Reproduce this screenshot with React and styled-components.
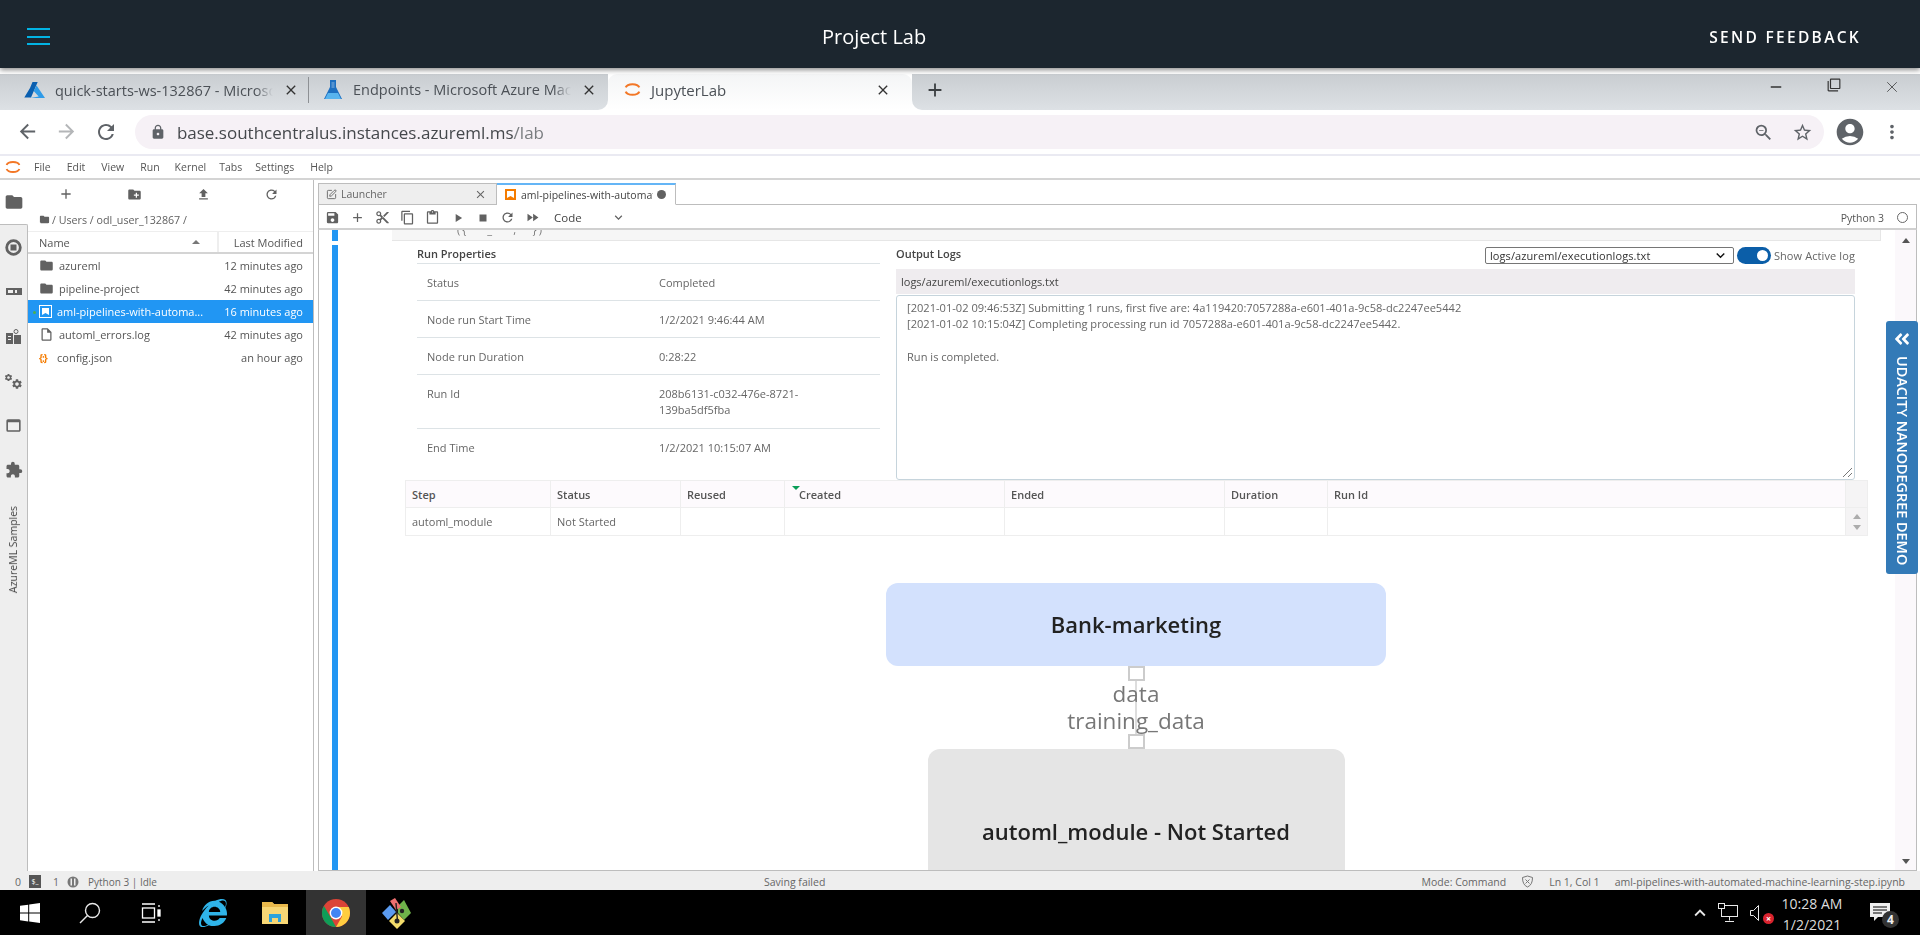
import React from 'react';
import styled, { createGlobalStyle } from 'styled-components';
import { SquarePen, X } from 'lucide-react';
import { FaAngleDoubleLeft, FaInternetExplorer } from 'react-icons/fa';
import {
  MdAdd, MdArrowBack, MdArrowForward, MdAccountCircle, MdClose, MdContentCopy, MdContentCut, MdContentPaste,
  MdCreateNewFolder, MdExpandMore, MdExtension, MdFastForward, MdFileUpload, MdFolder, MdLock, MdMoreVert,
  MdOutlineFilterNone, MdOutlineInsertDriveFile, MdOutlineStarBorder, MdOutlineWebAsset,
  MdPlayArrow, MdRefresh, MdRemove, MdSave, MdSettings, MdStop, MdZoomOut,
} from 'react-icons/md';

const GlobalStyle = createGlobalStyle`
  html, body { margin: 0; padding: 0; height: 100%; background: #fff; }
  * { box-sizing: border-box; }
`;

const Screen = styled.div`
  position: relative;
  width: 1920px;
  height: 935px;
  display: flex;
  flex-direction: column;
  overflow: hidden;
  font-family: "Open Sans", "Noto Sans", sans-serif;
  color: #555;
  filter: blur(0.35px);
`;

/* classroom header */
const TopBar = styled.header`
  flex: 0 0 68px;
  display: grid;
  grid-template-columns: 795px auto 1fr;
  align-items: center;
  padding: 5px 59px 0 27px;
  background: #1c262f;
  color: #fff;
  box-shadow: 0 2px 5px rgba(0, 0, 0, 0.45);
  z-index: 2;
`;
const Burger = styled.div`
  width: 23px;
  height: 17px;
  border-top: 2px solid #02b3e4;
  border-bottom: 2px solid #02b3e4;
  display: flex;
  align-items: center;
  &::before { content: ''; display: block; width: 100%; height: 2px; background: #02b3e4; }
`;
const ProjectTitle = styled.div`
  font-size: 20px;
`;
const Feedback = styled.div`
  justify-self: end;
  font-size: 15.5px;
  font-weight: 600;
  letter-spacing: 2.3px;
`;

/* chrome */
const TabStrip = styled.div`
  flex: 0 0 36px;
  margin-top: 6px;
  display: flex;
  background: #fff;
  font-size: 14.5px;
  color: #4b5056;
`;
const InactiveTabs = styled.div`
  display: flex;
  width: 608px;
  background: linear-gradient(#c9cdd1, #dde1e5);
  border-bottom-right-radius: 10px;
`;
const BrowserTab = styled.div`
  position: relative;
  width: ${p => p.$w}px;
  padding: 0 0 5px ${p => p.$pad}px;
  display: flex;
  align-items: center;
  gap: 10px;
  ${p => p.$sep && `border-right: 1px solid #8d9094; margin: 3px 0 7px; height: 26px; padding-bottom: 0;`}
`;
const ActiveTab = styled(BrowserTab)`
  background: linear-gradient(#f4f5f6, #fff);
  border-radius: 9px 9px 0 0;
  font-size: 15px;
`;
const TabLabel = styled.span`
  width: ${p => p.$w}px;
  white-space: nowrap;
  overflow: hidden;
  -webkit-mask-image: linear-gradient(to right, #000 92%, transparent);
`;
const TabClose = styled.span`
  margin-left: ${p => p.$gap}px;
  display: flex;
  color: #333;
`;
const StripRest = styled.div`
  flex: 1;
  display: flex;
  align-items: center;
  padding: 0 0 5px 12px;
  background: linear-gradient(#c9cdd1, #dde1e5);
  border-bottom-left-radius: 10px;
  color: #3c4043;
`;
const WindowButtons = styled.div`
  margin-left: auto;
  margin-right: 19px;
  margin-top: -6px;
  display: flex;
  gap: 42px;
  color: #333;
`;
const AddressRow = styled.div`
  flex: 0 0 46px;
  display: flex;
  align-items: center;
  padding: 0 17px 0 16px;
  color: #5f6368;
  border-bottom: 2px solid #eaeaf2;
`;
const NavButtons = styled.div`
  display: flex;
  gap: 16px;
  width: 119px;
`;
const AddressPill = styled.div`
  width: 1691px;
  height: 34px;
  display: flex;
  align-items: center;
  padding: 0 11px 0 15px;
  border-radius: 17px;
  background: #f6f1f6;
`;
const Url = styled.span`
  margin-left: 11px;
  font-size: 17px;
  color: #45484c;
  em { font-style: normal; color: #7a7d80; }
`;
const PillIcons = styled.div`
  margin-left: auto;
  display: flex;
  gap: 18px;
  align-items: center;
`;

/* jupyter */
const MenuBar = styled.nav`
  flex: 0 0 24px;
  display: flex;
  align-items: center;
  padding-left: 5px;
  border-bottom: 2px solid #d4d4d4;
  font-size: 10.5px;
  color: #555;
`;
const MenuLabel = styled.span`
  margin-left: ${p => p.$m}px;
`;
const Main = styled.div`
  flex: 1;
  min-height: 0;
  display: flex;
`;
const Rail = styled.div`
  flex: 0 0 27px;
  display: flex;
  flex-direction: column;
`;
const RailActive = styled.div`
  flex: 0 0 44px;
  display: flex;
  justify-content: center;
  align-items: center;
  color: #616161;
`;
const RailRest = styled.div`
  flex: 1;
  background: #eee;
  border-top: 1px solid #bdbdbd;
  border-right: 1px solid #bdbdbd;
  border-radius: 0 2px 0 0;
`;
const RailIcon = styled.div`
  height: 44.6px;
  display: flex;
  align-items: center;
  justify-content: center;
  color: #616161;
`;
const GearPair = styled.div`
  display: flex;
  align-items: flex-start;
  height: 17px;
  & > svg:first-child { margin-right: -2px; }
  & > svg:last-child { margin-top: 5px; }
`;
const RailText = styled.div`
  margin: 13px auto 0;
  writing-mode: vertical-rl;
  transform: rotate(180deg);
  font-size: 10.5px;
  color: #444;
  width: 27px;
  line-height: 27px;
`;
const Sidebar = styled.aside`
  flex: 0 0 286px;
  border-right: 1px solid #bdbdbd;
  display: flex;
  flex-direction: column;
`;
const SideTools = styled.div`
  flex: 0 0 28px;
  display: grid;
  grid-template-columns: repeat(4, 68.5px);
  margin-left: 4px;
  align-items: center;
  justify-items: center;
  color: #616161;
`;
const Crumbs = styled.div`
  flex: 0 0 23px;
  display: flex;
  align-items: center;
  gap: 2px;
  padding-left: 11px;
  font-size: 10.7px;
  color: #616161;
`;
const ListHead = styled.div`
  flex: 0 0 23px;
  display: flex;
  align-items: center;
  border-top: 1px solid #eee;
  border-bottom: 2px solid #d4d4d4;
  font-size: 11px;
  color: #555;
`;
const NameHead = styled.div`
  flex: 0 0 191px;
  height: 100%;
  padding: 0 11px;
  display: flex;
  align-items: center;
  justify-content: space-between;
  border-right: 2px solid #eee;
  &::after { content: ''; border: 4px solid transparent; border-bottom: 4px solid #777; margin: -5px 6px 0 0; }
`;
const ModHead = styled.div`
  flex: 1;
  text-align: right;
  padding-right: 10px;
`;
const FileRow = styled.div`
  position: relative;
  height: 23px;
  display: flex;
  align-items: center;
  padding: 0 10px 0 11px;
  font-size: 11px;
  color: ${p => (p.$selected ? '#fff' : '#555')};
  background: ${p => (p.$selected ? '#2196f3' : 'transparent')};
`;
const FileName = styled.span`
  margin-left: 5px;
`;
const FileTime = styled.span`
  margin-left: auto;
`;
const RunDot = styled.span`
  position: absolute;
  left: 5px;
  top: 11px;
  width: 3px;
  height: 3px;
  border-radius: 50%;
  background: #4caf50;
`;

const Dock = styled.section`
  flex: 0 0 1599px;
  margin-left: 4px;
  display: flex;
  flex-direction: column;
  min-height: 0;
`;
const DockTabs = styled.div`
  flex: 0 0 25px;
  padding-top: 3px;
  display: flex;
  font-size: 10.5px;
  border-bottom: 1px solid #bdbdbd;
`;
const DockTab = styled.div`
  width: ${p => p.$w}px;
  display: flex;
  align-items: center;
  gap: 4px;
  padding: 0 9px 0 7px;
  margin-bottom: -1px;
  border: 1px solid #bdbdbd;
  border-left: ${p => (p.$active ? 'none' : '1px solid #bdbdbd')};
  background: ${p => (p.$active ? '#fff' : '#eee')};
  border-bottom-color: ${p => (p.$active ? '#fff' : '#bdbdbd')};
  border-top: ${p => (p.$active ? '2px solid #64b5f6' : '1px solid #bdbdbd')};
  color: ${p => (p.$active ? '#444' : '#666')};
  white-space: nowrap;
  overflow: hidden;
`;
const DockTabName = styled.span`
  flex: 1;
  overflow: hidden;
`;
const DirtyDot = styled.span`
  flex: 0 0 9px;
  height: 9px;
  border-radius: 50%;
  background: #616161;
`;
const NbToolbar = styled.div`
  flex: 0 0 25px;
  display: flex;
  align-items: center;
  padding: 2px 8px 0 1px;
  border: 1px solid #bdbdbd;
  border-top: none;
  border-bottom: 2px solid #d0d0d0;
  color: #616161;
`;
const ToolSlot = styled.span`
  flex: 0 0 25px;
  display: flex;
  justify-content: center;
`;
const CellKind = styled.span`
  width: 57px;
  margin-left: 9px;
  font-size: 11.5px;
  color: #444;
`;
const KernelName = styled.span`
  margin-left: auto;
  margin-right: 13px;
  font-size: 10.5px;
  color: #555;
`;
const KernelIdle = styled.span`
  width: 11px;
  height: 11px;
  border: 1px solid #666;
  border-radius: 50%;
`;
const NotebookBody = styled.div`
  flex: 1;
  min-height: 0;
  display: flex;
  border: 1px solid #bdbdbd;
  border-top: none;
`;
const Cells = styled.div`
  flex: 1;
  min-width: 0;
  overflow: hidden;
  padding-left: 13px;
`;
const Scrollbar = styled.div`
  flex: 0 0 21px;
  display: flex;
  flex-direction: column;
  justify-content: space-between;
  align-items: center;
  padding: 8px 0 6px;
  background: #fbf8fb;
`;
const ArrowUp = styled.span`
  border: 4px solid transparent;
  border-bottom: 5px solid #555;
  border-top: none;
`;
const ArrowDown = styled.span`
  border: 4px solid transparent;
  border-top: 5px solid #555;
  border-bottom: none;
`;
const CodeRow = styled.div`
  display: flex;
  height: 11px;
`;
const Collapser = styled.div`
  flex: 0 0 6px;
  background: #2196f3;
`;
const CodeTail = styled.div`
  margin-left: 54px;
  width: 1489px;
  height: 11px;
  background: #f6f6f6;
  border-bottom: 1px solid #e6e6e6;
  border-right: 1px solid #e6e6e6;
  overflow: hidden;
  font-size: 11px;
  line-height: 0;
  letter-spacing: 2px;
  padding-left: 65px;
  color: #777;
  white-space: pre;
`;
const OutputRow = styled.div`
  display: flex;
  margin-top: 4px;
  height: 640px;
`;
const Output = styled.div`
  margin-left: 67px;
  width: 1462px;
  display: flex;
  flex-direction: column;
`;
const TopPanels = styled.div`
  height: 239px;
  display: flex;
  padding-left: 12px;
`;
const PropsPanel = styled.div`
  flex: 0 0 463px;
`;
const PanelTitle = styled.div`
  height: 19px;
  font-size: 11px;
  font-weight: 600;
  line-height: 17px;
  color: #444;
  border-bottom: 1px solid ${p => (p.$plain ? 'transparent' : '#dde3e6')};
`;
const PropRow = styled.div`
  height: ${p => p.$h}px;
  padding-top: 10.5px;
  display: grid;
  grid-template-columns: 232px 160px;
  padding-left: 10px;
  font-size: 11px;
  line-height: 16px;
  color: #666;
  border-bottom: 1px solid ${p => (p.$last ? 'transparent' : '#dde3e6')};
`;
const LogsPanel = styled.div`
  flex: 0 0 959px;
  margin-left: 16px;
`;
const LogsHead = styled.div`
  height: 24px;
  display: flex;
  align-items: flex-start;
  justify-content: space-between;
`;
const LogControls = styled.div`
  display: flex;
  align-items: center;
  gap: 3px;
  margin-top: 2px;
  font-size: 11px;
  letter-spacing: 0.1px;
  color: #666;
`;
const FakeSelect = styled.div`
  width: 249px;
  height: 17px;
  padding: 0 4px;
  display: flex;
  align-items: center;
  justify-content: space-between;
  border: 1px solid #767676;
  border-radius: 2px;
  font-size: 11px;
  color: #333;
`;
const Toggle = styled.div`
  position: relative;
  width: 34px;
  height: 17px;
  border-radius: 9px;
  background: #0b5ea8;
  &::after {
    content: '';
    position: absolute;
    right: 3px;
    top: 3px;
    width: 11px;
    height: 11px;
    border-radius: 50%;
    background: #fff;
  }
`;
const FileBar = styled.div`
  height: 25px;
  padding-left: 5px;
  line-height: 25px;
  font-size: 11px;
  color: #444;
  background: #efecef;
`;
const LogBox = styled.div`
  position: relative;
  height: 185px;
  margin-top: 1px;
  padding: 4px 10px;
  border: 1px solid #c6d4dc;
  border-radius: 3px;
  font-size: 11.1px;
  line-height: 16.3px;
  color: #666;
  white-space: pre-line;
`;
const Grip = styled.svg`
  position: absolute;
  right: 1px;
  bottom: 1px;
`;
const StepTable = styled.table`
  width: 1462px;
  table-layout: fixed;
  border-collapse: collapse;
  font-size: 11px;
  color: #666;
`;
const StepHead = styled.th`
  position: relative;
  height: 27px;
  padding: 0 6px 0 ${p => (p.$sorted ? 14 : 6)}px;
  text-align: left;
  font-weight: 600;
  color: #555;
  background: ${p => (p.$gutter ? '#f5f4f5' : '#fdfafd')};
  border: 1px solid #eee;
`;
const StepCell = styled.td`
  height: 28px;
  padding: 0 6px;
  border: 1px solid #eee;
  background: ${p => (p.$gutter ? '#f5f4f5' : '#fff')};
`;
const SortMark = styled.span`
  position: absolute;
  left: 7px;
  top: 5px;
  border: 4px solid transparent;
  border-top: 4px solid #0a9d58;
  border-bottom: none;
`;
const StepperArrows = styled.div`
  display: flex;
  flex-direction: column;
  align-items: center;
  gap: 6px;
  span { opacity: 0.45; }
`;
const Graph = styled.div`
  margin-top: 47px;
  display: flex;
  flex-direction: column;
  align-items: center;
`;
const GraphNode = styled.div`
  width: ${p => p.$w}px;
  height: ${p => p.$h}px;
  padding-top: ${p => p.$top}px;
  flex-shrink: 0;
  border-radius: 12px;
  background: ${p => p.$bg};
  text-align: center;
  font-size: 22px;
  font-weight: 600;
  line-height: 28px;
  color: #222;
`;
const Port = styled.div`
  width: 17px;
  height: 15px;
  border: 2px solid #ccc;
  background: #fff;
`;
const Edge = styled.div`
  position: relative;
  height: 53px;
  display: flex;
  flex-direction: column;
  align-items: center;
  font-size: 22.5px;
  font-weight: 500;
  line-height: 26.5px;
  color: #777;
  &::before {
    content: '';
    position: absolute;
    top: 0;
    bottom: 0;
    left: 50%;
    width: 2px;
    margin-left: -1px;
    background: #ddd;
  }
`;
const EdgeLabel = styled.span`
  position: relative;
`;

const DemoTab = styled.div`
  position: absolute;
  right: 2px;
  top: 321px;
  width: 32px;
  height: 253px;
  display: flex;
  flex-direction: column;
  align-items: center;
  padding-top: 9px;
  gap: 8px;
  background: #337ab7;
  border-radius: 3px;
  color: #fff;
  z-index: 3;
`;
const DemoText = styled.span`
  writing-mode: vertical-rl;
  font-size: 14.4px;
  font-weight: 600;
  white-space: nowrap;
  line-height: 32px;
`;

const StatusBar = styled.footer`
  flex: 0 0 19px;
  display: flex;
  align-items: center;
  padding: 2px 15px 0 15px;
  background: #eee;
  font-size: 10.5px;
  color: #666;
`;
const StatusLeft = styled.div`
  flex: 0 0 749px;
  display: flex;
  align-items: center;
`;
const TermIcon = styled.span`
  width: 12px;
  height: 13px;
  margin: 0 12px 0 8px;
  background: #555;
  color: #fff;
  font-size: 7px;
  line-height: 13px;
  text-align: center;
`;
const KernelSpin = styled.span`
  display: flex;
  margin-left: 8px;
`;
const KernelChip = styled.span`
  margin-left: 9px;
  font-size: 10px;
`;
const StatusRight = styled.div`
  margin-left: auto;
  display: flex;
  align-items: center;
  gap: 15px;
`;

const Taskbar = styled.div`
  flex: 0 0 45px;
  display: flex;
  align-items: stretch;
  background: #000;
  color: #e8e8e8;
`;
const TaskSlot = styled.div`
  width: ${p => p.$w || 60}px;
  display: flex;
  align-items: center;
  justify-content: center;
  background: ${p => (p.$active ? '#333' : 'transparent')};
`;
const Tray = styled.div`
  margin-left: auto;
  display: flex;
  align-items: center;
`;
const TrayChevron = styled.span`
  display: flex;
  transform: rotate(180deg);
`;
const TrayNetwork = styled.span`
  display: flex;
  margin-left: 7px;
`;
const Clock = styled.div`
  width: 88px;
  margin-left: 4px;
  padding-top: 3px;
  text-align: center;
  font-size: 14px;
  line-height: 21px;
  color: #ddd;
`;
const SpeakerWrap = styled.span`
  position: relative;
  display: flex;
  margin-left: 12px;
`;
const MuteBadge = styled.span`
  position: absolute;
  right: -10px;
  bottom: -2px;
  width: 11px;
  height: 11px;
  border-radius: 50%;
  background: #d9232e;
  color: #fff;
  font-size: 9px;
  font-weight: 700;
  line-height: 11px;
  text-align: center;
`;
const NotifyWrap = styled.span`
  position: relative;
  display: flex;
  margin: 0 30px 0 14px;
`;
const NotifyBadge = styled.span`
  position: absolute;
  right: -9px;
  bottom: -6px;
  width: 17px;
  height: 17px;
  border-radius: 50%;
  background: #333;
  color: #eee;
  font-size: 12px;
  font-weight: 700;
  line-height: 17px;
  text-align: center;
`;
const ConfigGlyph = styled.span`
  width: 13px;
  font-size: 10px;
  font-weight: 700;
  color: #f57c00;
  white-space: nowrap;
  letter-spacing: -1px;
`;

const AzureLogo = () => (
  <svg width="21" height="18" viewBox="0 0 21 18">
    <path d="M8.5 1h5.2L7 16.5H0.3L6 7z" fill="#0a5fb0" />
    <path d="M12.6 4.500L21 17H6.500l8.200-1.500-5-5.500z" fill="#2f9be8" />
  </svg>
);
const FlaskLogo = () => (
  <svg width="20" height="22" viewBox="0 0 20 22">
    <path d="M7 1h6v7l6 12H1L7 8z" fill="#1d6fc0" />
    <path d="M5 14h10l3 6H2z" fill="#58b4ee" />
    <rect x="8.500" y="3" width="3" height="6" fill="#fff" opacity="0.25" />
  </svg>
);
const JupyterMark = ({ size = 17 }) => (
  <svg width={size} height={size} viewBox="0 0 20 20" fill="none" stroke="#f37726" strokeWidth="2.4">
    <path d="M2 7.500C4 2.500 16 2.500 18 7.500" />
    <path d="M2 12.500C4 17.500 16 17.500 18 12.500" />
  </svg>
);
const RingStop = () => (
  <svg width="17" height="17" viewBox="0 0 17 17">
    <circle cx="8.500" cy="8.500" r="6.800" fill="none" stroke="#616161" strokeWidth="2.800" />
    <rect x="5.500" y="5.500" width="6" height="6" fill="#616161" />
  </svg>
);
const RunningIcon = () => (
  <svg width="16" height="10" viewBox="0 0 16 10" fill="#616161">
    <rect x="0" y="1" width="16" height="7" />
    <rect x="2" y="3" width="5" height="3" fill="#eee" />
    <rect x="9" y="3" width="2" height="3" fill="#eee" />
  </svg>
);
const CommandsIcon = () => (
  <svg width="15" height="15" viewBox="0 0 15 15" fill="#616161">
    <path d="M0 4h7v11H0z" />
    <path d="M8 6h7v9H8z" />
    <circle cx="10" cy="2.500" r="2" fill="none" stroke="#616161" />
    <rect x="2" y="7" width="3" height="1" fill="#eee" />
    <rect x="2" y="10" width="3" height="1" fill="#eee" />
  </svg>
);
const NotebookFile = ({ color, back }) => (
  <svg width="13" height="13" viewBox="0 0 13 13">
    <rect x="0.500" y="0.500" width="12" height="12" fill={back} stroke={color} />
    <path d="M3 3h7v7L6.500 8 3 10z" fill={color} />
  </svg>
);
const WindowsLogo = () => (
  <svg width="20" height="20" viewBox="0 0 20 20" fill="#fff">
    <path d="M0 2.800l8.200-1.100v7.900H0zM9.200 1.500L20 0v9.600H9.200zM0 10.600h8.200v7.800L0 17.200zM9.200 10.600H20V20L9.200 18.500z" />
  </svg>
);
const SearchGlyph = () => (
  <svg width="22" height="22" viewBox="0 0 22 22" fill="none" stroke="#e8e8e8" strokeWidth="1.400">
    <circle cx="13.500" cy="8.500" r="7" />
    <path d="M8.500 13.500L1 21" />
  </svg>
);
const TaskView = () => (
  <svg width="20" height="20" viewBox="0 0 20 20" fill="none" stroke="#fff" strokeWidth="1.300">
    <path d="M1 1h13M1 19h13" />
    <rect x="1.500" y="5" width="12" height="10" />
    <path d="M18 2v2M18 16v2" />
    <rect x="17" y="7" width="2" height="6" fill="#fff" />
  </svg>
);
const ExplorerIcon = () => (
  <svg width="28" height="27" viewBox="0 0 28 27">
    <path d="M1 3h10l2 2h14v20H1z" fill="#f8d775" />
    <path d="M1 3h10l2 2h14v3H1z" fill="#e9b94c" />
    <path d="M8 23v-8h12v8h-3v-4h-6v4z" fill="#2ea3dc" />
  </svg>
);
const ChromeIcon = () => (
  <svg width="28" height="28" viewBox="0 0 28 28">
    <circle cx="14" cy="14" r="14" fill="#db4437" />
    <path d="M2 7l7 12 5 9C6 28 0 22 0 14c0-2.600.7-5 2-7z" fill="#0f9d58" />
    <path d="M14 8h12.700c.8 1.800 1.300 3.900 1.300 6 0 7.700-6.300 14-14 14l6-10.500z" fill="#ffcd40" />
    <circle cx="14" cy="14" r="6.400" fill="#fff" />
    <circle cx="14" cy="14" r="5" fill="#4285f4" />
  </svg>
);
const GitExtIcon = () => (
  <svg width="32" height="32" viewBox="0 0 32 32">
    <path d="M8 16l8-8 8 8-8 8z" fill="#111" />
    <path d="M1 16l8-8 6 7-8 8z" fill="#5b9bf0" />
    <path d="M17 9l6-6 0 0 7 13-7 7-6-7z" fill="#6fb34a" />
    <path d="M8 24l8-8 8 8-8 8z" fill="#f3dc6b" />
    <path d="M9 4l5-3 6 9-5 3z" fill="#ef6f6f" />
    <circle cx="16" cy="24" r="2.500" fill="#222" />
    <path d="M15 6l1.500 18" stroke="#222" strokeWidth="1.400" />
    <circle cx="21" cy="14" r="2.200" fill="#222" />
  </svg>
);
const NetworkIcon = () => (
  <svg width="20" height="20" viewBox="0 0 20 20" fill="none" stroke="#e8e8e8">
    <rect x="3.500" y="2.500" width="16" height="11" fill="#000" />
    <rect x="0.500" y="0.500" width="6" height="5" fill="#000" />
    <path d="M11.500 13.500v4M7 18.500h9" />
  </svg>
);
const SpeakerIcon = () => (
  <svg width="14" height="18" viewBox="0 0 14 18" fill="none" stroke="#e8e8e8">
    <path d="M0.500 6.500h3l5-5v15l-5-5h-3z" />
  </svg>
);
const NotifyIcon = () => (
  <svg width="20" height="19" viewBox="0 0 20 19">
    <path d="M0 0h20v14H8l-4 4v-4H0z" fill="#eee" />
    <path d="M3 4h14M3 7h14M3 10h9" stroke="#000" strokeWidth="1" />
  </svg>
);
const ShieldIcon = () => (
  <svg width="13" height="13" viewBox="0 0 13 13" fill="none" stroke="#777">
    <path d="M6.500 1l5 1.500c0 5-1.500 8-5 9.500-3.500-1.500-5-4.500-5-9.500z" />
    <path d="M4.500 4.500l4 4M8.500 4.500l-4 4" />
  </svg>
);
const KernelGlyph = () => (
  <svg width="12" height="12" viewBox="0 0 12 12" fill="#777">
    <circle cx="6" cy="6" r="5.500" />
    <rect x="3.500" y="2.500" width="1.500" height="7" fill="#eee" />
    <rect x="7" y="2.500" width="1.500" height="7" fill="#eee" />
  </svg>
);

const menus = [['File', 13], ['Edit', 16], ['View', 16], ['Run', 16], ['Kernel', 15], ['Tabs', 13], ['Settings', 13], ['Help', 16]];

const files = [
  { name: 'azureml', time: '12 minutes ago', icon: <MdFolder size={15} color="#616161" /> },
  { name: 'pipeline-project', time: '42 minutes ago', icon: <MdFolder size={15} color="#616161" /> },
  { name: 'aml-pipelines-with-automa...', time: '16 minutes ago', icon: <NotebookFile color="#fff" back="#2196f3" />, selected: true },
  { name: 'automl_errors.log', time: '42 minutes ago', icon: <MdOutlineInsertDriveFile size={15} color="#616161" /> },
  { name: 'config.json', time: 'an hour ago', icon: <ConfigGlyph>{'{:}'}</ConfigGlyph> },
];

const tools = [MdSave, MdAdd, MdContentCut, MdContentCopy, MdContentPaste, MdPlayArrow, MdStop, MdRefresh, MdFastForward];

const props = [
  ['Status', 'Completed', 37],
  ['Node run Start Time', '1/2/2021 9:46:44 AM', 37],
  ['Node run Duration', '0:28:22', 37],
  ['Run Id', '208b6131-c032-476e-8721-139ba5df5fba', 54],
  ['End Time', '1/2/2021 10:15:07 AM', 37],
];

const columns = [145, 130, 104, 220, 220, 103, 518, 22];

export default function App() {
  return (
    <Screen>
      <GlobalStyle />
      <TopBar>
        <Burger />
        <ProjectTitle>Project Lab</ProjectTitle>
        <Feedback>SEND FEEDBACK</Feedback>
      </TopBar>

      <TabStrip>
        <InactiveTabs>
          <BrowserTab $w={309} $pad={24} $sep>
            <AzureLogo />
            <TabLabel $w={218}>quick-starts-ws-132867 - Microsoft Azure</TabLabel>
            <TabClose $gap={0}><MdClose size={16} /></TabClose>
          </BrowserTab>
          <BrowserTab $w={299} $pad={14}>
            <FlaskLogo />
            <TabLabel $w={218}>Endpoints - Microsoft Azure Machine</TabLabel>
            <TabClose $gap={0}><MdClose size={16} /></TabClose>
          </BrowserTab>
        </InactiveTabs>
        <ActiveTab $w={304} $pad={16}>
          <JupyterMark />
          <span>JupyterLab</span>
          <TabClose $gap={139}><MdClose size={16} /></TabClose>
        </ActiveTab>
        <StripRest>
          <MdAdd size={22} />
          <WindowButtons>
            <MdRemove size={18} />
            <MdOutlineFilterNone size={14} />
            <X size={18} strokeWidth={1} />
          </WindowButtons>
        </StripRest>
      </TabStrip>

      <AddressRow>
        <NavButtons>
          <MdArrowBack size={23} />
          <MdArrowForward size={23} color="#b4b6b8" />
          <MdRefresh size={24} />
        </NavButtons>
        <AddressPill>
          <MdLock size={16} />
          <Url>base.southcentralus.instances.azureml.ms<em>/lab</em></Url>
          <PillIcons>
            <MdZoomOut size={21} />
            <MdOutlineStarBorder size={21} />
          </PillIcons>
        </AddressPill>
        <MdAccountCircle size={32} style={{ marginLeft: 10 }} />
        <MdMoreVert size={22} style={{ marginLeft: 15 }} />
      </AddressRow>

      <MenuBar>
        <JupyterMark size={16} />
        {menus.map(([label, m]) => <MenuLabel key={label} $m={m}>{label}</MenuLabel>)}
      </MenuBar>

      <Main>
        <Rail>
          <RailActive><MdFolder size={20} /></RailActive>
          <RailRest>
            <RailIcon><RingStop /></RailIcon>
            <RailIcon><RunningIcon /></RailIcon>
            <RailIcon><CommandsIcon /></RailIcon>
            <RailIcon><GearPair><MdSettings size={9} /><MdSettings size={12} /></GearPair></RailIcon>
            <RailIcon><MdOutlineWebAsset size={19} /></RailIcon>
            <RailIcon><MdExtension size={18} /></RailIcon>
            <RailText>AzureML Samples</RailText>
          </RailRest>
        </Rail>

        <Sidebar>
          <SideTools>
            <MdAdd size={16} />
            <MdCreateNewFolder size={15} />
            <MdFileUpload size={15} />
            <MdRefresh size={15} />
          </SideTools>
          <Crumbs><MdFolder size={11} />/ Users / odl_user_132867 /</Crumbs>
          <ListHead>
            <NameHead>Name</NameHead>
            <ModHead>Last Modified</ModHead>
          </ListHead>
          {files.map(f => (
            <FileRow key={f.name} $selected={f.selected}>
              {f.selected && <RunDot />}
              {f.icon}
              <FileName>{f.name}</FileName>
              <FileTime>{f.time}</FileTime>
            </FileRow>
          ))}
        </Sidebar>

        <Dock>
          <DockTabs>
            <DockTab $w={179}>
              <SquarePen size={11} />
              <DockTabName>Launcher</DockTabName>
              <MdClose size={13} />
            </DockTab>
            <DockTab $w={179} $active>
              <NotebookFile color="#fff" back="#f57c00" />
              <DockTabName>aml-pipelines-with-automated</DockTabName>
              <DirtyDot />
            </DockTab>
          </DockTabs>
          <NbToolbar>
            {tools.map((Icon, i) => <ToolSlot key={i}><Icon size={i === 5 || i === 6 ? 14 : 15} /></ToolSlot>)}
            <CellKind>Code</CellKind>
            <MdExpandMore size={15} />
            <KernelName>Python 3</KernelName>
            <KernelIdle />
          </NbToolbar>
          <NotebookBody>
            <Cells>
              <CodeRow>
                <Collapser />
                <CodeTail>{'({   \'_\'   ,   })'}</CodeTail>
              </CodeRow>
              <OutputRow>
                <Collapser />
                <Output>
                  <TopPanels>
                    <PropsPanel>
                      <PanelTitle>Run Properties</PanelTitle>
                      {props.map(([label, value, h], i) => (
                        <PropRow key={label} $h={h} $last={i === props.length - 1}>
                          <span>{label}</span>
                          <span>{value}</span>
                        </PropRow>
                      ))}
                    </PropsPanel>
                    <LogsPanel>
                      <LogsHead>
                        <PanelTitle $plain>Output Logs</PanelTitle>
                        <LogControls>
                          <FakeSelect>logs/azureml/executionlogs.txt<MdExpandMore size={17} color="#111" /></FakeSelect>
                          <Toggle />
                          Show Active log
                        </LogControls>
                      </LogsHead>
                      <FileBar>logs/azureml/executionlogs.txt</FileBar>
                      <LogBox>
                        {'[2021-01-02 09:46:53Z] Submitting 1 runs, first five are: 4a119420:7057288a-e601-401a-9c58-dc2247ee5442\n[2021-01-02 10:15:04Z] Completing processing run id 7057288a-e601-401a-9c58-dc2247ee5442.\n\nRun is completed.'}
                        <Grip width="12" height="12" viewBox="0 0 12 12" stroke="#777">
                          <path d="M2 11L11 2M7 11l4-4" />
                        </Grip>
                      </LogBox>
                    </LogsPanel>
                  </TopPanels>
                  <StepTable>
                    <colgroup>
                      {columns.map((w, i) => <col key={i} width={w} />)}
                    </colgroup>
                    <thead>
                      <tr>
                        <StepHead>Step</StepHead>
                        <StepHead>Status</StepHead>
                        <StepHead>Reused</StepHead>
                        <StepHead $sorted><SortMark />Created</StepHead>
                        <StepHead>Ended</StepHead>
                        <StepHead>Duration</StepHead>
                        <StepHead>Run Id</StepHead>
                        <StepHead $gutter />
                      </tr>
                    </thead>
                    <tbody>
                      <tr>
                        <StepCell>automl_module</StepCell>
                        <StepCell>Not Started</StepCell>
                        <StepCell />
                        <StepCell />
                        <StepCell />
                        <StepCell />
                        <StepCell />
                        <StepCell $gutter>
                          <StepperArrows><ArrowUp /><ArrowDown /></StepperArrows>
                        </StepCell>
                      </tr>
                    </tbody>
                  </StepTable>
                  <Graph>
                    <GraphNode $w={500} $h={83} $top={27} $bg="#d3e1fd">Bank-marketing</GraphNode>
                    <Port />
                    <Edge>
                      <EdgeLabel>data</EdgeLabel>
                      <EdgeLabel>training_data</EdgeLabel>
                    </Edge>
                    <Port />
                    <GraphNode $w={417} $h={140} $top={68} $bg="#e5e5e5">automl_module - Not Started</GraphNode>
                  </Graph>
                </Output>
              </OutputRow>
            </Cells>
            <Scrollbar><ArrowUp /><ArrowDown /></Scrollbar>
          </NotebookBody>
        </Dock>
      </Main>

      <StatusBar>
        <StatusLeft>
          <span>0</span>
          <TermIcon>$_</TermIcon>
          <span>1</span>
          <KernelSpin><KernelGlyph /></KernelSpin>
          <KernelChip>Python 3 | Idle</KernelChip>
        </StatusLeft>
        <span>Saving failed</span>
        <StatusRight>
          <span>Mode: Command</span>
          <ShieldIcon />
          <span>Ln 1, Col 1</span>
          <span>aml-pipelines-with-automated-machine-learning-step.ipynb</span>
        </StatusRight>
      </StatusBar>

      <Taskbar>
        <TaskSlot $w={60}><WindowsLogo /></TaskSlot>
        <TaskSlot $w={60}><SearchGlyph /></TaskSlot>
        <TaskSlot $w={62}><TaskView /></TaskSlot>
        <TaskSlot $w={62}>
          <FaInternetExplorer size={28} color="#2fb4e9" />
        </TaskSlot>
        <TaskSlot $w={62}><ExplorerIcon /></TaskSlot>
        <TaskSlot $w={60} $active><ChromeIcon /></TaskSlot>
        <TaskSlot $w={62}><GitExtIcon /></TaskSlot>
        <Tray>
          <TrayChevron><MdExpandMore size={22} /></TrayChevron>
          <TrayNetwork><NetworkIcon /></TrayNetwork>
          <SpeakerWrap><SpeakerIcon /><MuteBadge>×</MuteBadge></SpeakerWrap>
          <Clock>10:28 AM<br />1/2/2021</Clock>
          <NotifyWrap><NotifyIcon /><NotifyBadge>4</NotifyBadge></NotifyWrap>
        </Tray>
      </Taskbar>

      <DemoTab>
        <FaAngleDoubleLeft size={18} />
        <DemoText>UDACITY NANODEGREE DEMO</DemoText>
      </DemoTab>
    </Screen>
  );
}
